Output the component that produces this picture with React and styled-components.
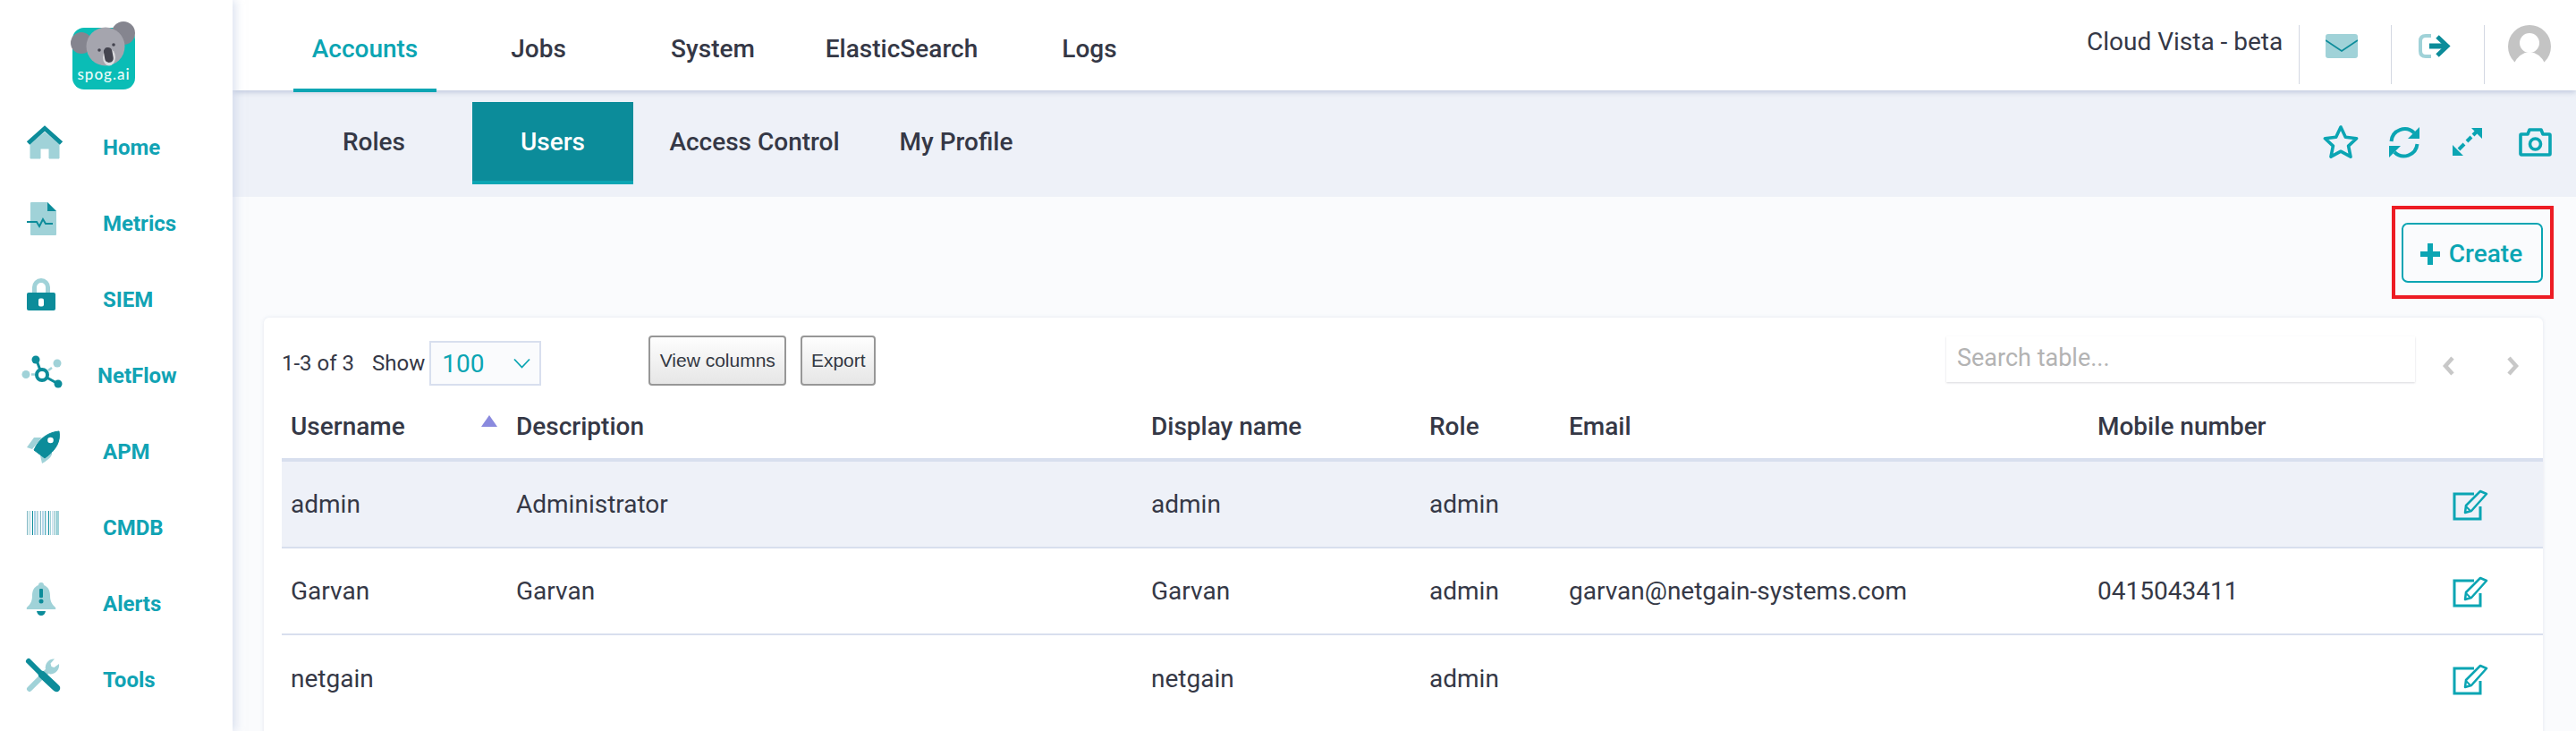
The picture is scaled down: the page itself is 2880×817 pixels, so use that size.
import React from "react";
import styled, { createGlobalStyle } from "styled-components";

const DARK = "#0c8c9a";
const LIGHT = "#a0d2d8";
const TEAL = "#0ba5b3";
const INK = "#353846";

const Global = createGlobalStyle`
  html, body { margin: 0; padding: 0; height: 100%; overflow: hidden; background: #fafbfd; }
  body { font-family: Roboto, "Liberation Sans", sans-serif; color: ${INK}; }
  #root { height: 100%; }
  * { box-sizing: border-box; }
`;

const Shell = styled.div`
  display: flex;
  height: 817px;
  overflow: hidden;
`;

const Sidebar = styled.aside`
  flex: 0 0 260px;
  background: #fff;
  box-shadow: 3px 0 10px rgba(190, 200, 225, 0.55);
  position: relative;
  z-index: 3;
`;

const LogoWrap = styled.div`
  height: 117px;
  padding: 21px 0 0 77px;
  svg { display: block; }
`;

const NavRow = styled.div`
  display: flex;
  align-items: center;
  height: 85px;
  padding-left: 20px;
`;

const NavIcon = styled.svg`
  flex: 0 0 60px;
  width: 60px;
  height: 50px;
`;

const NavLabel = styled.span`
  margin-left: ${(p) => p.$offset}px;
  padding-top: 10px;
  font-size: 24px;
  font-weight: 700;
  color: #11a3b4;
`;

const Main = styled.main`
  flex: 1;
  min-width: 0;
  display: flex;
  flex-direction: column;
`;

const TopBar = styled.header`
  flex: 0 0 101px;
  height: 101px;
  display: flex;
  align-items: stretch;
  justify-content: space-between;
  background: #fff;
  box-shadow: 0 2px 6px rgba(170, 182, 210, 0.7);
  position: relative;
  z-index: 2;
  padding-left: 68px;
`;

const TopTabs = styled.nav`
  display: flex;
`;

const TopTab = styled.div`
  width: ${(p) => p.$w}px;
  height: 103px;
  display: flex;
  align-items: center;
  justify-content: center;
  padding-top: 10px;
  font-size: 28px;
  font-weight: 500;
  color: ${(p) => (p.$active ? TEAL : INK)};
  border-bottom: 4px solid ${(p) => (p.$active ? TEAL : "transparent")};
`;

const TopRight = styled.div`
  display: flex;
  align-items: flex-start;
  padding-top: 28px;
`;

const Tenant = styled.div`
  width: 237px;
  height: 66px;
  padding-top: 2px;
  font-size: 28px;
  line-height: 34px;
  color: ${INK};
`;

const HeaderCell = styled.div`
  width: ${(p) => p.$w}px;
  height: 66px;
  border-left: 1px solid #d3d8e2;
  padding: ${(p) => p.$pad};
  svg { display: block; }
`;

const SubBar = styled.div`
  flex: 0 0 119px;
  height: 119px;
  display: flex;
  justify-content: space-between;
  background: #eef1f8;
  padding-left: 48px;
`;

const SubTabs = styled.nav`
  display: flex;
  padding-top: 13px;
`;

const SubTab = styled.div`
  width: ${(p) => p.$w}px;
  height: 92px;
  display: flex;
  align-items: center;
  justify-content: center;
  font-size: 28px;
  font-weight: 500;
  color: ${(p) => (p.$active ? "#fff" : INK)};
  background: ${(p) => (p.$active ? DARK : "transparent")};
  border-bottom: 4px solid ${(p) => (p.$active ? TEAL : "transparent")};
`;

const ToolIcons = styled.div`
  display: flex;
  align-items: flex-start;
  padding: 38px 27px 0 0;
  svg { display: block; }
`;

const ToolIcon = styled.svg`
  margin-left: ${(p) => p.$ml}px;
  margin-top: ${(p) => p.$mt}px;
`;

const Content = styled.section`
  flex: 1;
  min-height: 0;
  padding: 0 37px 0 35px;
  background: #fafbfd;
`;

const ActionRow = styled.div`
  height: 135px;
  display: flex;
  justify-content: flex-end;
  align-items: flex-start;
  padding-top: 10px;
  margin-right: -12px;
`;

const Highlight = styled.div`
  width: 181px;
  height: 104px;
  border: 4px solid #ed1c24;
  padding: 15px 0 0 7px;
`;

const CreateButton = styled.button`
  width: 158px;
  height: 67px;
  display: flex;
  align-items: center;
  justify-content: center;
  gap: 10px;
  background: transparent;
  border: 2px solid ${TEAL};
  border-radius: 7px;
  font: 500 28px Roboto, sans-serif;
  color: ${TEAL};
  padding: 2px 2px 0 0;
`;

const Card = styled.div`
  background: #fff;
  border-radius: 6px 6px 0 0;
  box-shadow: 0 0 4px rgba(200, 208, 225, 0.45);
  height: 470px;
  padding: 0 0 0 20px;
`;

const Toolbar = styled.div`
  height: 97px;
  display: flex;
  align-items: flex-start;
`;

const Count = styled.span`
  margin-top: 37px;
  font-size: 24px;
  line-height: 28px;
`;

const ShowLabel = styled(Count)`
  margin-left: 20px;
`;

const SelectBox = styled.div`
  margin: 26px 0 0 5px;
  width: 125px;
  height: 50px;
  border: 2px solid #d8dfee;
  background: #fafbfd;
  display: flex;
  align-items: center;
  justify-content: space-between;
  padding: 0 10px 0 12px;
  font-size: 28px;
  color: ${TEAL};
`;

const GrayButton = styled.button`
  margin: 20px 0 0 ${(p) => p.$ml}px;
  width: ${(p) => p.$w}px;
  height: 56px;
  border: 2px solid #979797;
  border-radius: 4px;
  background: linear-gradient(#fefefe, #e6e6e6);
  font: 21px "Liberation Sans", Arial, sans-serif;
  color: #333842;
  padding: 0;
`;

const SearchBox = styled.div`
  margin: 21px 0 0 auto;
  width: 524px;
  height: 51px;
  box-shadow: 0 1px 2px rgba(170, 170, 180, 0.45);
  padding: 8px 12px;
  font-size: 27px;
  line-height: 32px;
  color: #b3b3b3;
`;

const Pager = styled.div`
  display: flex;
  gap: 57px;
  margin-top: 43px;
  padding: 0 26px 0 30px;
`;

const Row = styled.div`
  display: grid;
  grid-template-columns: 262px 710px 311px 156px 591px 1fr;
  align-items: center;
  height: ${(p) => p.$h}px;
  background: ${(p) => (p.$shade ? "#eef1f8" : "#fff")};
  border-bottom: ${(p) => p.$line}px solid #d8dfee;
  font-size: 28px;
  font-weight: ${(p) => (p.$head ? 500 : 400)};
  padding-bottom: ${(p) => (p.$head ? 12 : 0)}px;
  position: relative;
`;

const Cell = styled.div`
  padding-left: ${(p) => (p.$first ? 10 : 0)}px;
  white-space: nowrap;
`;

const SortMark = styled.span`
  position: absolute;
  left: 223px;
  top: 12px;
  width: 0;
  height: 0;
  border-left: 9px solid transparent;
  border-right: 9px solid transparent;
  border-bottom: 13px solid #8a8ade;
`;

const EditAnchor = styled.div`
  position: absolute;
  left: 2427px;
  top: 50%;
  transform: translateY(-50%);
  svg { display: block; }
`;

const HomeIcon = () => (
  <NavIcon viewBox="0 0 60 50">
    <path d="M14 42V26L30 13l16 13v16h-11V31H25v11z" fill={LIGHT} stroke={LIGHT} strokeWidth="1" strokeLinejoin="round" />
    <path d="M11.500 25 30 8.500 48.500 25" fill="none" stroke={DARK} strokeWidth="5" />
  </NavIcon>
);
const MetricsIcon = () => (
  <NavIcon viewBox="0 0 60 50">
    <path d="M15 6h18l10 10v26a1 1 0 0 1-1 1H15a1 1 0 0 1-1-1V7a1 1 0 0 1 1-1z" fill={LIGHT} />
    <path d="M33 6l10 10H33z" fill={DARK} />
    <path d="M10 28h11l3 5 4-8 3 5h8" fill="none" stroke={DARK} strokeWidth="2" />
  </NavIcon>
);
const LockIcon = () => (
  <NavIcon viewBox="0 0 60 50">
    <path d="M18.500 23v-7a7.500 7.500 0 0 1 15 0v7" fill="none" stroke={LIGHT} strokeWidth="5" />
    <rect x="10" y="22" width="32" height="20" rx="2" fill={DARK} />
    <rect x="23" y="28.500" width="6" height="9" rx="2" fill="#fff" />
  </NavIcon>
);
const NetIcon = () => (
  <NavIcon viewBox="0 0 60 50">
    <path d="M21 13l6 16 18 10" fill="none" stroke={DARK} strokeWidth="3" />
    <circle cx="27" cy="29" r="6" fill="#fff" stroke={DARK} strokeWidth="4" />
    <circle cx="20" cy="12" r="4.500" fill={DARK} />
    <circle cx="45" cy="39" r="4.500" fill={DARK} />
    <circle cx="9" cy="28.500" r="4.500" fill={LIGHT} />
    <circle cx="44" cy="16" r="4.500" fill={LIGHT} />
    <path d="M15 28.500h4M34 24l4-3" stroke={LIGHT} strokeWidth="2.500" fill="none" />
  </NavIcon>
);
const RocketIcon = () => (
  <NavIcon viewBox="0 0 60 50">
    <path d="M10 25l8-11h9L16 27zM27 43l-2-9 13-8v7q-2 5-11 10z" fill={LIGHT} />
    <path d="M46 7c2 11-3 21-16 30L18 28C24 14 35 8 46 7z" fill={DARK} stroke={DARK} strokeLinejoin="round" />
    <circle cx="36.500" cy="17" r="3.300" fill="#fff" />
  </NavIcon>
);
const bars = [[0,1,"#7fb8c4"],[2,1,"#a0d2d8"],[4,1,"#c5ddec"],[6,1,DARK],[8,2,"#a9cfe6"],[11,1,"#7fb8c4"],[13,1,"#c5ddec"],[15,1,"#7fb8c4"],[17,2,"#b9d7ea"],[20,1,"#3aa3b3"],[22,1,"#c5ddec"],[24,1,DARK],[26,1,"#a0d2d8"],[28,1,"#c5ddec"],[30,1,"#7fb8c4"],[32,4,"#a0d2d8"]];
const BarcodeIcon = () => (
  <NavIcon viewBox="0 0 60 50">
    {bars.map(([x, w, c]) => (
      <rect key={x} x={10 + x} y="11" width={w} height="27" fill={c} />
    ))}
  </NavIcon>
);
const BellIcon = () => (
  <NavIcon viewBox="0 0 60 50">
    <path d="M26 6c2 0 3 1 3 3 5 2 7 6 7 12 0 7 3 10 6 13q1 2-1 2H11q-2 0-1-2c3-3 6-6 6-13 0-6 2-10 7-12 0-2 1-3 3-3z" fill={LIGHT} />
    <path d="M21 38h10q-1 5-5 5t-5-5z" fill={DARK} />
    <rect x="24" y="13" width="4" height="10" rx="1" fill={DARK} />
    <circle cx="26" cy="27" r="2.500" fill={DARK} />
  </NavIcon>
);
const ToolsIcon = () => (
  <NavIcon viewBox="0 0 60 50">
    <path d="M13 40l20-20" stroke={LIGHT} strokeWidth="6" strokeLinecap="round" fill="none" />
    <path d="M41 6.500a9.500 9.500 0 0 0-9 14l4 3a10 10 0 0 0 10-11.500l-5.500 4-3-1-1-3.500z" fill={LIGHT} />
    <path d="M12 9l15 15" stroke={DARK} strokeWidth="6" strokeLinecap="round" fill="none" />
    <path d="M27 24l16 15" stroke={DARK} strokeWidth="8.500" strokeLinecap="round" fill="none" />
  </NavIcon>
);

const navItems = [
  ["Home", HomeIcon, 35],
  ["Metrics", MetricsIcon, 35],
  ["SIEM", LockIcon, 35],
  ["NetFlow", NetIcon, 29],
  ["APM", RocketIcon, 35],
  ["CMDB", BarcodeIcon, 35],
  ["Alerts", BellIcon, 35],
  ["Tools", ToolsIcon, 35],
];

const Logo = () => (
  <svg width="80" height="82" viewBox="0 0 80 82">
    <rect x="4" y="10" width="70" height="69" rx="13" fill="#0abdb6" />
    <circle cx="14" cy="27" r="12" fill="#85858f" />
    <circle cx="61" cy="16" r="13" fill="#85858f" />
    <circle cx="41" cy="31" r="21.500" fill="#a5a5ae" />
    <ellipse cx="45" cy="43" rx="7" ry="9.500" fill="#dcdce0" />
    <rect x="39.500" y="32" width="9.500" height="17" rx="4.500" fill="#44444f" transform="rotate(-10 44 40)" />
    <circle cx="34" cy="35" r="1.800" fill="#44444f" />
    <circle cx="50" cy="29" r="1.800" fill="#44444f" />
    <text x="39" y="68" textAnchor="middle" fill="#e9fbf9" fontFamily="Lato, sans-serif" fontSize="17" fontWeight="500" letterSpacing="1">spog.ai</text>
  </svg>
);

const EditIcon = () => (
  <svg width="41" height="36" viewBox="0 0 41 36" fill="none" stroke={TEAL} strokeWidth="3">
    <path d="M24 6H2v28h29V20" />
    <path d="M14 27l1-8L31 3l7 3-17 19z" strokeWidth="2.500" strokeLinejoin="round" />
    <path d="M15 20l5 5" strokeWidth="2" />
  </svg>
);

const rows = [
  ["admin", "Administrator", "admin", "admin", "", ""],
  ["Garvan", "Garvan", "Garvan", "admin", "garvan@netgain-systems.com", "0415043411"],
  ["netgain", "", "netgain", "admin", "", ""],
];

const Chevron = ({ left }) => (
  <svg width="15" height="22" viewBox="0 0 15 22" fill="none" stroke="#c8c8c8" strokeWidth="4.500">
    <path d={left ? "M12 2 4 11l8 9" : "M3 2l8 9-8 9"} />
  </svg>
);

export default function App() {
  return (
    <Shell>
      <Global />
      <Sidebar>
        <LogoWrap><Logo /></LogoWrap>
        {navItems.map(([label, Icon, offset]) => (
          <NavRow key={label}>
            <Icon />
            <NavLabel $offset={offset}>{label}</NavLabel>
          </NavRow>
        ))}
      </Sidebar>
      <Main>
        <TopBar>
          <TopTabs>
            <TopTab $w={160} $active>Accounts</TopTab>
            <TopTab $w={228}>Jobs</TopTab>
            <TopTab $w={162}>System</TopTab>
            <TopTab $w={260}>ElasticSearch</TopTab>
            <TopTab $w={160}>Logs</TopTab>
          </TopTabs>
          <TopRight>
            <Tenant>Cloud Vista - beta</Tenant>
            <HeaderCell $w={103} $pad="10px 0 0 29px">
              <svg width="36" height="27" viewBox="0 0 36 27">
                <rect width="36" height="27" rx="3" fill={LIGHT} />
                <path d="M0 7l18 12L36 7" fill="none" stroke={DARK} strokeWidth="1.800" />
              </svg>
            </HeaderCell>
            <HeaderCell $w={104} $pad="10px 0 0 30px">
              <svg width="36" height="27" viewBox="0 0 36 27" fill="none">
                <path d="M14 2H8Q2 2 2 8v11q0 6 6 6h6" stroke={LIGHT} strokeWidth="4" />
                <path d="M12 13.500h17" stroke={DARK} strokeWidth="6" />
                <path d="M21 3l11 10.500L21 24" stroke={DARK} strokeWidth="5" />
              </svg>
            </HeaderCell>
            <HeaderCell $w={103} $pad="0 0 0 26px">
              <svg width="48" height="44" viewBox="0 0 48 44">
                <circle cx="24" cy="24" r="24" fill="#c4c4c4" />
                <circle cx="24" cy="20" r="11" fill="#fff" />
                <path d="M6 44q6-13 18-14 12 1 18 14z" fill="#fff" />
              </svg>
            </HeaderCell>
          </TopRight>
        </TopBar>
        <SubBar>
          <SubTabs>
            <SubTab $w={220}>Roles</SubTab>
            <SubTab $w={180} $active>Users</SubTab>
            <SubTab $w={271}>Access Control</SubTab>
            <SubTab $w={180}>My Profile</SubTab>
          </SubTabs>
          <ToolIcons>
            <ToolIcon $ml={0} $mt={0} width="40" height="38" viewBox="0 0 40 38" fill="none" stroke={TEAL} strokeWidth="3.600" strokeLinejoin="round">
              <path d="M20 3l5.300 11.200 12.300 1.500-9 8.400 2.400 12.100L20 30.200 9 36.200l2.400-12.100-9-8.400 12.300-1.500z" />
            </ToolIcon>
            <ToolIcon $ml={33} $mt={2} width="36" height="36" viewBox="0 0 36 36" fill="none" stroke={TEAL} strokeWidth="4">
              <path d="M3.500 17A15 15 0 0 1 29 7.500" />
              <path d="M35 1v13H22z" fill={TEAL} stroke="none" />
              <path d="M32.500 20A15 15 0 0 1 7 29" />
              <path d="M1 35V22h13z" fill={TEAL} stroke="none" />
            </ToolIcon>
            <ToolIcon $ml={36} $mt={4} width="34" height="32" viewBox="0 0 34 32" fill={TEAL} stroke="none">
              <path d="M33 0v12L21 0zM0 31V19l12 12z" />
              <path d="M7 24l6-6M16 15l5-5M23 8l4-4" stroke={TEAL} strokeWidth="4" fill="none" />
            </ToolIcon>
            <ToolIcon $ml={40} $mt={4} width="37" height="32" viewBox="0 0 37 32" fill="none" stroke={TEAL} strokeWidth="3.600" strokeLinejoin="round">
              <path d="M3 7h7l2-5h13l2 5h7a1 1 0 0 1 1 1v21a1 1 0 0 1-1 1H3a1 1 0 0 1-1-1V8a1 1 0 0 1 1-1z" />
              <circle cx="18.500" cy="18" r="6" />
            </ToolIcon>
          </ToolIcons>
        </SubBar>
        <Content>
          <ActionRow>
            <Highlight>
              <CreateButton>
                <svg width="22" height="24" viewBox="0 0 22 24" fill={TEAL}>
                  <path d="M8 0h6v9h8v6h-8v9H8v-9H0V9h8z" />
                </svg>
                Create
              </CreateButton>
            </Highlight>
          </ActionRow>
          <Card>
            <Toolbar>
              <Count>1-3 of 3</Count>
              <ShowLabel>Show</ShowLabel>
              <SelectBox>
                100
                <svg width="19" height="12" viewBox="0 0 19 12" fill="none" stroke={TEAL} strokeWidth="1.800">
                  <path d="M1 1.500l8.500 9 8.500-9" />
                </svg>
              </SelectBox>
              <GrayButton $ml={120} $w={154}>View columns</GrayButton>
              <GrayButton $ml={16} $w={84}>Export</GrayButton>
              <SearchBox>Search table...</SearchBox>
              <Pager>
                <Chevron left />
                <Chevron />
              </Pager>
            </Toolbar>
            <Row $head $h={64} $line={4}>
              <Cell $first>Username</Cell>
              <Cell>Description</Cell>
              <Cell>Display name</Cell>
              <Cell>Role</Cell>
              <Cell>Email</Cell>
              <Cell>Mobile number</Cell>
              <SortMark />
            </Row>
            {rows.map((r, i) => (
              <Row key={r[0]} $h={97} $line={i === 2 ? 0 : 2} $shade={i === 0}>
                <Cell $first>{r[0]}</Cell>
                <Cell>{r[1]}</Cell>
                <Cell>{r[2]}</Cell>
                <Cell>{r[3]}</Cell>
                <Cell>{r[4]}</Cell>
                <Cell>{r[5]}</Cell>
                <EditAnchor><EditIcon /></EditAnchor>
              </Row>
            ))}
          </Card>
        </Content>
      </Main>
    </Shell>
  );
}
